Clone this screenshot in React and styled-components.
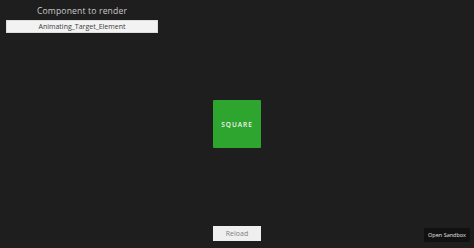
import styled, { createGlobalStyle } from "styled-components";

const Global = createGlobalStyle`
  html, body {
    margin: 0;
    padding: 0;
    background: #1e1e1e;
    font-family: "Open Sans", "Liberation Sans", sans-serif;
  }
`;

const Page = styled.div`
  position: relative;
  width: 474px;
  height: 248px;
  display: grid;
  grid-template-rows: 1fr auto 1fr;
  overflow: hidden;
`;

const Picker = styled.div`
  align-self: start;
  display: flex;
  flex-direction: column;
  align-items: center;
  width: 152px;
  margin: 5px 0 0 6px;
  gap: 3px;
`;

const Label = styled.div`
  color: #cacaca;
  font-size: 8.6px;
  line-height: 12px;
  letter-spacing: 0.15px;
`;

const Select = styled.div`
  width: 100%;
  height: 13px;
  background: #f2f2f2;
  border: 1px solid #dcdcdc;
  box-sizing: border-box;
  color: #3a3a3a;
  font-size: 7px;
  line-height: 11px;
  text-align: center;
`;

const Square = styled.div`
  justify-self: center;
  width: 48px;
  height: 48px;
  background: #2ea52e;
  border-radius: 1px;
  display: flex;
  align-items: center;
  justify-content: center;
  color: #f4f4f4;
  font-size: 6.5px;
  font-weight: 600;
  letter-spacing: 1px;
`;

const Footer = styled.div`
  align-self: end;
  display: flex;
  justify-content: center;
  padding-bottom: 7px;
`;

const ReloadButton = styled.button`
  width: 48px;
  height: 15px;
  padding: 0;
  border: none;
  background: #efefef;
  color: #808080;
  font-family: inherit;
  font-size: 7px;
`;

const SandboxLink = styled.a`
  position: absolute;
  right: 4px;
  bottom: 6px;
  height: 14px;
  padding: 0 4px;
  display: flex;
  align-items: center;
  background: #111;
  border-radius: 2px;
  color: #e6e6e6;
  font-size: 5.5px;
  text-decoration: none;
`;

export default function App() {
  return (
    <Page>
      <Global />
      <Picker>
        <Label>Component to render</Label>
        <Select>Animating_Target_Element</Select>
      </Picker>
      <Square>SQUARE</Square>
      <Footer>
        <ReloadButton>Reload</ReloadButton>
      </Footer>
      <SandboxLink href="#">Open Sandbox</SandboxLink>
    </Page>
  );
}
